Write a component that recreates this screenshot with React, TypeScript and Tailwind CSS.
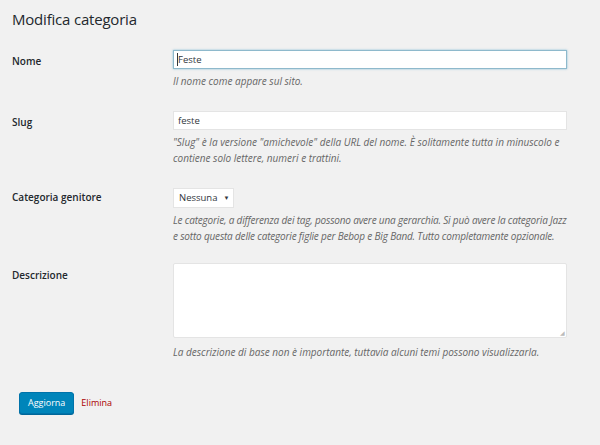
import React from "react";

const font = { fontFamily: '"Open Sans", "Noto Sans", sans-serif' };

function Row({
  label,
  children,
  className = "",
  labelPad = "pt-[4px]",
}: {
  label: string;
  children: React.ReactNode;
  className?: string;
  labelPad?: string;
}) {
  return (
    <div className={"flex " + className}>
      <div className={"w-[161px] shrink-0 text-[10px] font-semibold text-[#23282d] " + labelPad}>{label}</div>
      <div className="flex-1 pr-[33px]">{children}</div>
    </div>
  );
}

const Hint = ({ children, className = "mt-[4px]" }: { children: React.ReactNode; className?: string }) => (
  <p className={"text-[10px] leading-[16px] italic text-[#666] whitespace-nowrap " + className}>{children}</p>
);

export default function App() {
  return (
    <div style={font} className="w-[600px] h-[445px] bg-[#f1f1f1] pl-[12px] pt-[7px] overflow-hidden">
      <h1 className="text-[15px] leading-[24px] tracking-[-0.2px] text-[#23282d]">Modifica categoria</h1>

      <Row label="Nome" className="mt-[19px]">
        <div className="h-[19px] bg-white border border-[#8eb9cc] shadow-[0_0_2px_rgba(30,140,190,0.5)] px-[3px] text-[9.5px] leading-[17px] text-[#32373c]">
          <span className="border-l border-[#32373c]">Feste</span>
        </div>
        <Hint>Il nome come appare sul sito.</Hint>
      </Row>

      <Row label="Slug" className="mt-[22px]">
        <div className="h-[19px] bg-white border border-[#e4e4e4] px-[4px] text-[9.5px] leading-[17px] text-[#32373c]">feste</div>
        <Hint>
          "Slug" è la versione "amichevole" della URL del nome. È solitamente tutta in minuscolo e
          <br />
          contiene solo lettere, numeri e trattini.
        </Hint>
      </Row>

      <Row label="Categoria genitore" className="mt-[17px]" labelPad="pt-[7px]">
        <div className="inline-flex items-center h-[20px] w-[61px] bg-white border border-[#e4e4e4] pl-[5px] gap-[6px] text-[9.5px] text-[#32373c]">
          <span>Nessuna</span>
          <span className="text-[6px]">▼</span>
        </div>
        <Hint className="mt-[4px] tracking-[-0.18px]">
          Le categorie, a differenza dei tag, possono avere una gerarchia. Si può avere la categoria Jazz
          <br />
          e sotto questa delle categorie figlie per Bebop e Big Band. Tutto completamente opzionale.
        </Hint>
      </Row>

      <Row label="Descrizione" className="mt-[19px]" labelPad="pt-[5px]">
        <div className="relative h-[75px] bg-white border border-[#e4e4e4] rounded-[2px]">
          <span className="absolute right-[1px] bottom-[1px] text-[6px] text-[#bbb] leading-none">◢</span>
        </div>
        <Hint className="mt-[6px]">La descrizione di base non è importante, tuttavia alcuni temi possono visualizzarla.</Hint>
      </Row>

      <div className="flex items-center gap-[7px] mt-[32px] pl-[7px]">
        <button className="h-[22px] px-[8px] bg-[#0085ba] border border-[#0073aa] rounded-[3px] text-white text-[9px] shadow-[0_1px_0_#006799]">
          Aggiorna
        </button>
        <span className="text-[9px] text-[#a00]">Elimina</span>
      </div>
    </div>
  );
}
